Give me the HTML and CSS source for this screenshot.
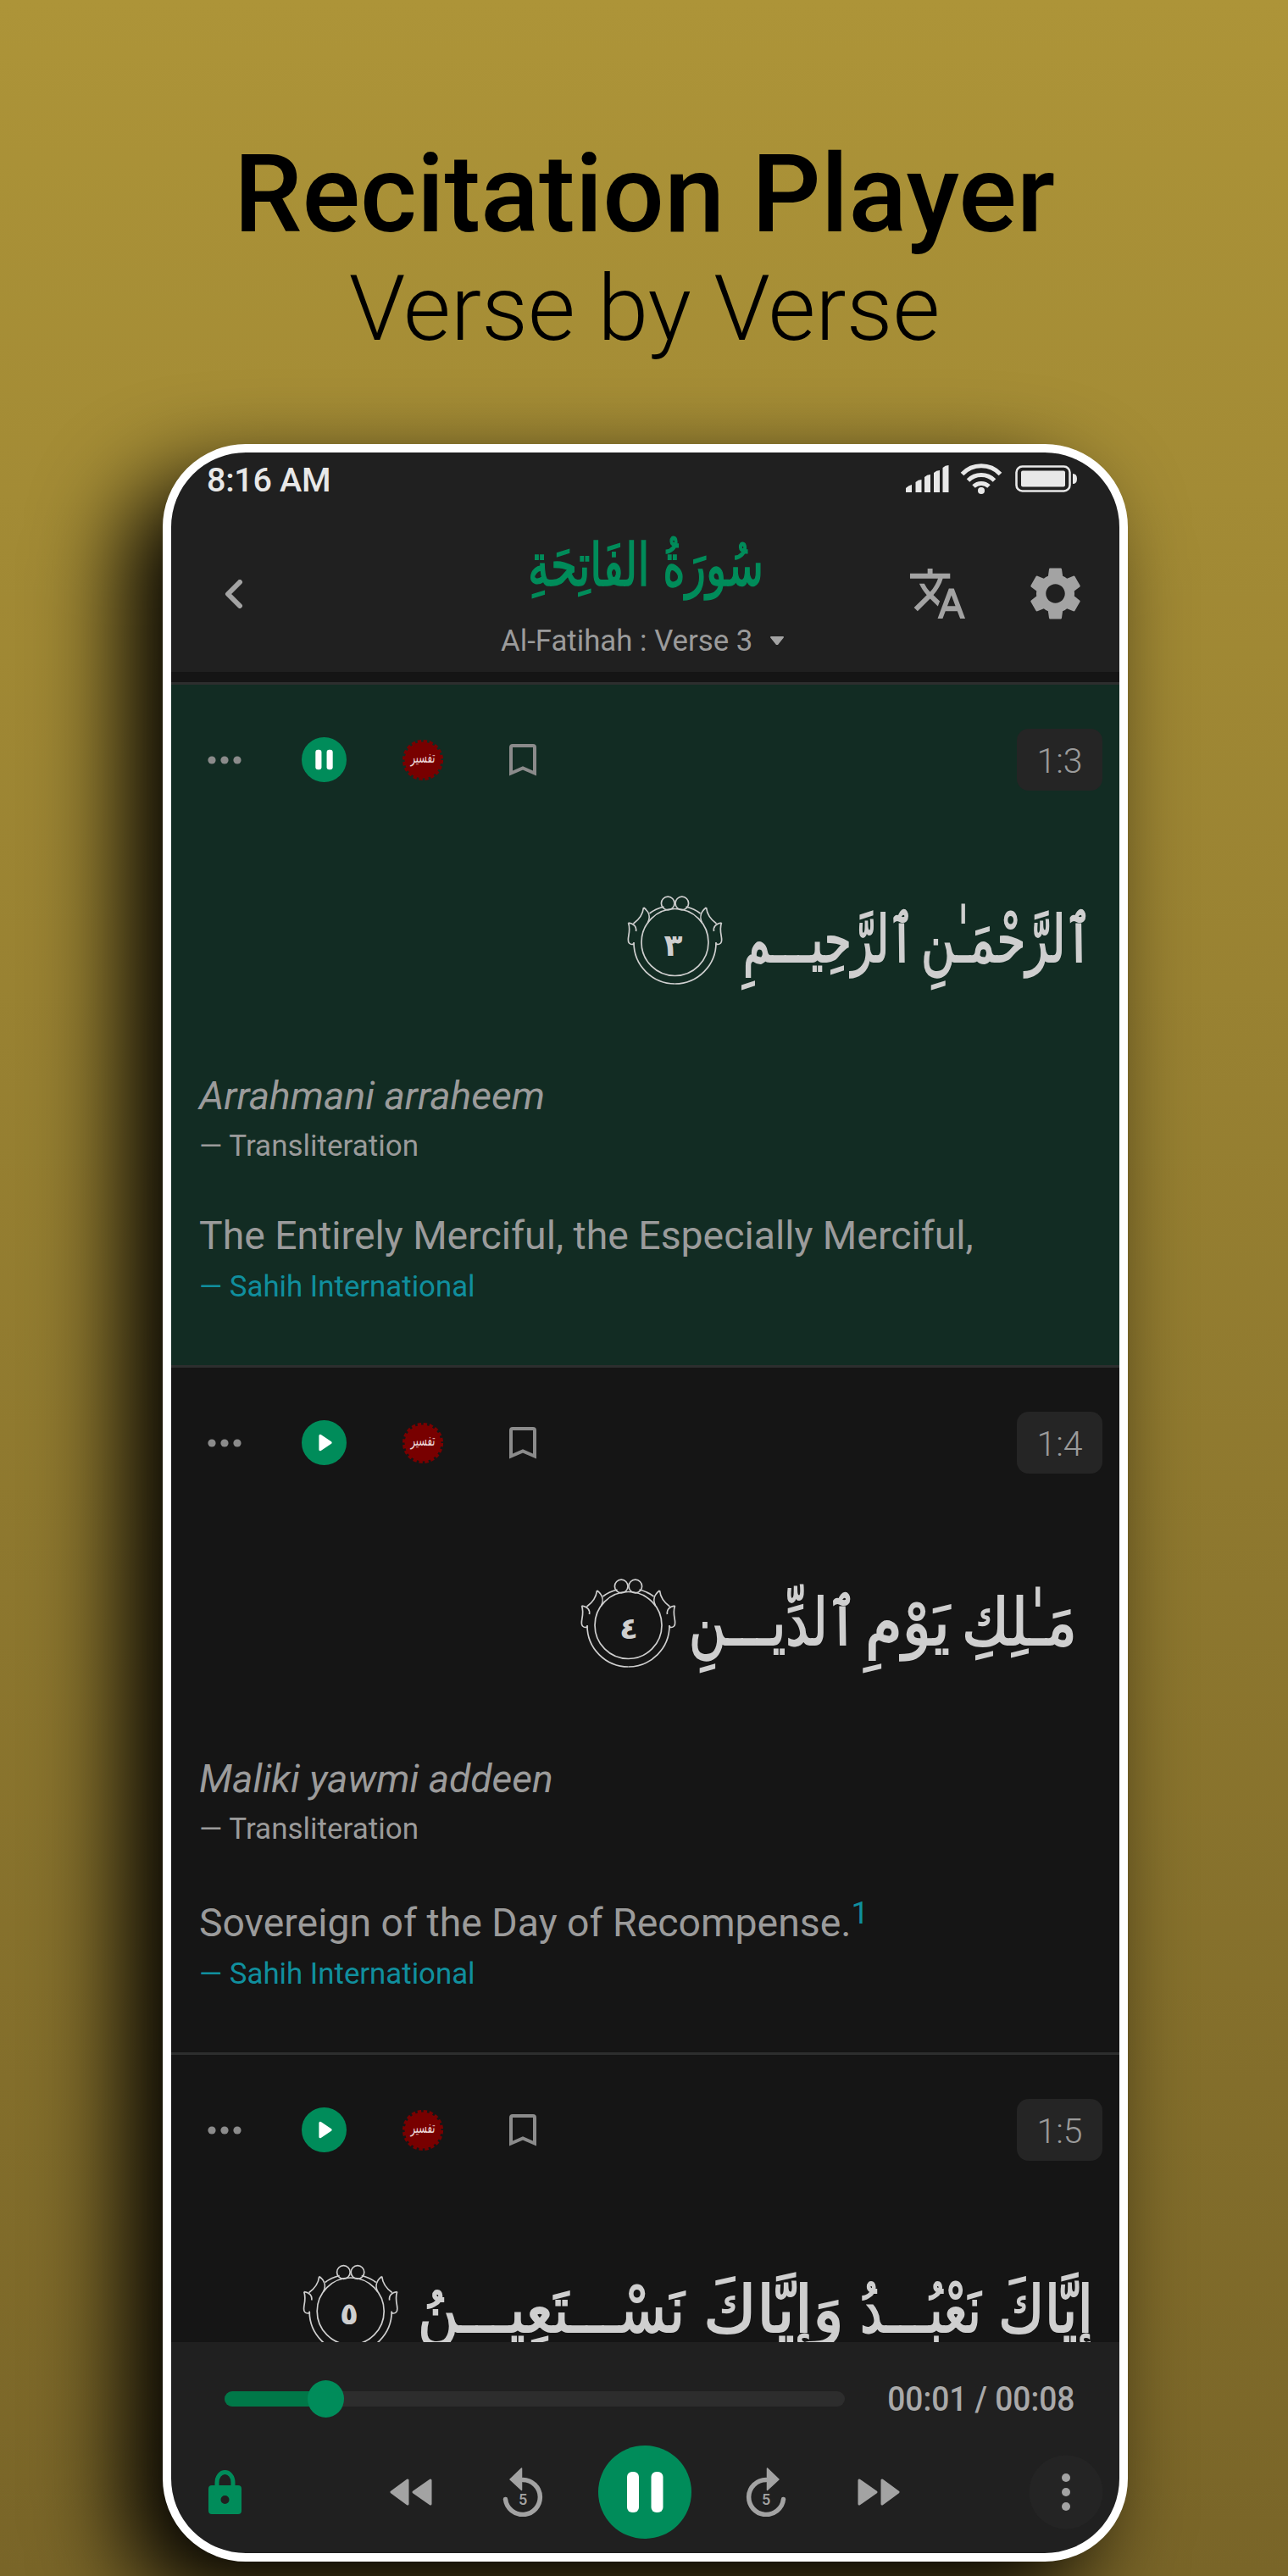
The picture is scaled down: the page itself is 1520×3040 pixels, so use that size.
FILE: index.html
```html
<!DOCTYPE html>
<html lang="en">
<head>
<meta charset="utf-8">
<title>Recitation Player</title>
<link rel="stylesheet" href="styles.css">
</head>
<body>
<svg class="defs" width="0" height="0" aria-hidden="true">
  <symbol id="i-dots" viewBox="0 0 40 10"><circle cx="5" cy="5" r="4.6"/><circle cx="20" cy="5" r="4.6"/><circle cx="35" cy="5" r="4.6"/></symbol>
  <symbol id="i-play" viewBox="0 0 52 52"><circle cx="26" cy="26" r="26" fill="#008c5a"/><path d="M21.500 18v16l12-8z" fill="#fff" stroke="#fff" stroke-width="3" stroke-linejoin="round"/></symbol>
  <symbol id="i-pause" viewBox="0 0 52 52"><circle cx="26" cy="26" r="26" fill="#008c5a"/><rect x="16" y="14.500" width="7" height="23" rx="3" fill="#fff"/><rect x="29" y="14.500" width="7" height="23" rx="3" fill="#fff"/></symbol>
  <symbol id="i-tafsir" viewBox="0 0 50 50"><circle cx="25" cy="25" r="21.500" fill="#780000"/><circle cx="25" cy="25" r="21.800" fill="none" stroke="#780000" stroke-width="4.600" stroke-dasharray="4.300 2.550"/></symbol>
  <symbol id="i-mark" viewBox="0 0 32 38"><path d="M2 4q0-2 2-2h24q2 0 2 2v30.500L16 28.500 2 34.500z" fill="none" stroke="#8b8b8b" stroke-width="4"/></symbol>
  <symbol id="half" overflow="visible"><path d="M0 49A48.500 48.500 0 0 1-48.500 0M-30-34C-25-38-19-40.500-13-42M-37-41C-30-36-29-29-32-23M-37-41C-38-32-42-27-49-22M-55-23C-48-22-45-18-46-13M-55-23C-51-12-58-3-54 1C-52 3-49 3-48 1"/><circle cx="-8.300" cy="-46" r="7.800"/></symbol>
  <symbol id="rosette" overflow="visible"><g fill="none" stroke="#cfcfcf" stroke-width="1.700"><circle r="39.500"/><use href="#half"/><use href="#half" transform="scale(-1 1)"/></g></symbol>
</svg>

<header class="headline">
  <h1>Recitation Player</h1>
  <p>Verse by Verse</p>
</header>

<main class="phone">
  <div class="status">
    <span class="clock">8:16 AM</span>
    <svg class="signal" viewBox="0 0 52 32"><path d="M0 32v-5q3-3 7-4v9zM11.500 32V20q3-3 7-3v15zM22 32V14q3-3 7-3v21zM33 32V9q3-3 7-3v26zM43.500 32V3q3-3 7-3v32z"/></svg>
    <svg class="wifi" viewBox="0 0 50 37"><path d="M2.500 12.500A31 31 0 0 1 47.500 12.500M9.500 20A22 22 0 0 1 40.500 20M16 27A13 13 0 0 1 34 27"/><circle cx="25" cy="32" r="4"/></svg>
    <svg class="battery" viewBox="0 0 73 32"><rect x="1.500" y="1.500" width="63" height="29" rx="7" fill="none" stroke="#e8e8e8" stroke-width="2.600"/><rect x="7" y="6.500" width="52" height="19" rx="2"/><path d="M68 10q5 0 5 6t-5 6z"/></svg>
  </div>

  <div class="topbar">
    <svg class="back" viewBox="0 0 22 34"><path d="M18 3L4 17l14 14"/></svg>
    <div class="title">
      <svg class="surah" viewBox="0 0 282 90"><text x="141" y="66" direction="rtl" text-anchor="middle" textLength="278" lengthAdjust="spacingAndGlyphs">سُورَةُ الفَاتِحَةِ</text></svg>
      <div class="verse-pick"><span>Al-Fatihah : Verse 3</span><svg class="caret" viewBox="0 0 18 12"><path d="M2 2h14L10 9.500q-1 1-2 0z"/></svg></div>
    </div>
    <svg class="translate" viewBox="0 0 24 24"><path d="M12.870 15.070l-2.540-2.510.03-.03c1.740-1.940 2.980-4.170 3.710-6.530H17V4h-7V2H8v2H1v1.990h11.170C11.500 7.920 10.440 9.750 9 11.350 8.070 10.320 7.300 9.190 6.690 8h-2c.73 1.630 1.730 3.170 2.980 4.560l-5.090 5.020L4 19l5-5 3.110 3.110.76-2.040zM18.500 10h-2L12 22h2l1.120-3h4.750L21 22h2l-4.500-12zm-2.620 7l1.620-4.330L19.120 17h-3.240z"/></svg>
    <svg class="gear" viewBox="0 0 24 24"><path d="M19.140 12.940c.04-.3.06-.61.06-.94 0-.32-.02-.64-.07-.94l2.030-1.580c.18-.14.23-.41.12-.61l-1.920-3.320c-.12-.22-.37-.29-.59-.22l-2.390.96c-.5-.38-1.030-.7-1.620-.94L14.400 2.810c-.04-.24-.24-.41-.48-.41h-3.840c-.24 0-.43.17-.47.41L9.250 5.350C8.660 5.590 8.120 5.920 7.630 6.290L5.240 5.330c-.22-.08-.47 0-.59.22L2.740 8.870c-.12.21-.08.47.12.61l2.030 1.580C4.840 11.360 4.800 11.690 4.800 12s.02.64.07.94l-2.030 1.580c-.18.14-.23.41-.12.61l1.920 3.320c.12.22.37.29.59.22l2.390-.96c.5.38 1.030.7 1.620.94l.36 2.540c.05.24.24.41.48.41h3.840c.24 0 .44-.17.47-.41l.36-2.540c.59-.24 1.130-.56 1.620-.94l2.390.96c.22.08.47 0 .59-.22l1.920-3.320c.12-.22.07-.47-.12-.61L19.140 12.940zM12 15.600c-1.980 0-3.600-1.620-3.600-3.600s1.620-3.600 3.600-3.600 3.600 1.620 3.600 3.600-1.620 3.600-3.600 3.600z"/></svg>
  </div>

  <div class="verses">
    <article class="verse active">
      <div class="tools">
        <svg class="dots"><use href="#i-dots"/></svg>
        <svg class="play"><use href="#i-pause"/></svg>
        <svg class="tafsir" viewBox="0 0 50 50"><use href="#i-tafsir"/><text x="25" y="28" textLength="29" lengthAdjust="spacingAndGlyphs">تفسير</text></svg>
        <svg class="mark"><use href="#i-mark"/></svg>
        <span class="num">1:3</span>
      </div>
      <svg class="ayah" viewBox="202 1040 1119 150">
        <text x="1290" y="1135" textLength="203" lengthAdjust="spacingAndGlyphs">ٱلرَّحْمَـٰنِ</text>
        <text x="1080" y="1135" textLength="203" lengthAdjust="spacingAndGlyphs">ٱلرَّحِيـــمِ</text>
        <use href="#rosette" x="796.500" y="1112"/>
        <text class="count" x="794.500" y="1128">٣</text>
      </svg>
      <p class="translit">Arrahmani arraheem</p>
      <p class="source">— Transliteration</p>
      <p class="english">The Entirely Merciful, the Especially Merciful,</p>
      <p class="source link">— Sahih International</p>
    </article>

    <article class="verse second">
      <div class="tools">
        <svg class="dots"><use href="#i-dots"/></svg>
        <svg class="play"><use href="#i-play"/></svg>
        <svg class="tafsir" viewBox="0 0 50 50"><use href="#i-tafsir"/><text x="25" y="28" textLength="29" lengthAdjust="spacingAndGlyphs">تفسير</text></svg>
        <svg class="mark"><use href="#i-mark"/></svg>
        <span class="num">1:4</span>
      </div>
      <svg class="ayah" viewBox="202 1040 1119 150">
        <text x="1271" y="1135" textLength="136" lengthAdjust="spacingAndGlyphs">مَـٰلِكِ</text>
        <text x="1121" y="1135" textLength="100" lengthAdjust="spacingAndGlyphs">يَوْمِ</text>
        <text x="1012" y="1135" textLength="199" lengthAdjust="spacingAndGlyphs">ٱلدِّيـــنِ</text>
        <use href="#rosette" x="741.500" y="1112"/>
        <text class="count" x="742" y="1128">٤</text>
      </svg>
      <p class="translit">Maliki yawmi addeen</p>
      <p class="source">— Transliteration</p>
      <p class="english">Sovereign of the Day of Recompense.<sup>1</sup></p>
      <p class="source link">— Sahih International</p>
    </article>

    <article class="verse">
      <div class="tools">
        <svg class="dots"><use href="#i-dots"/></svg>
        <svg class="play"><use href="#i-play"/></svg>
        <svg class="tafsir" viewBox="0 0 50 50"><use href="#i-tafsir"/><text x="25" y="28" textLength="29" lengthAdjust="spacingAndGlyphs">تفسير</text></svg>
        <svg class="mark"><use href="#i-mark"/></svg>
        <span class="num">1:5</span>
      </div>
      <svg class="ayah" viewBox="202 1040 1119 150">
        <text x="1290" y="1135" textLength="112" lengthAdjust="spacingAndGlyphs">إِيَّاكَ</text>
        <text x="1158" y="1135" textLength="143" lengthAdjust="spacingAndGlyphs">نَعْبُـــدُ</text>
        <text x="996" y="1135" textLength="166" lengthAdjust="spacingAndGlyphs">وَإِيَّاكَ</text>
        <text x="808" y="1135" textLength="315" lengthAdjust="spacingAndGlyphs">نَسْـــتَعِيـــنُ</text>
        <use href="#rosette" x="413.700" y="1110.500"/>
        <text class="count" x="412" y="1126">٥</text>
      </svg>
    </article>
  </div>

  <footer class="player">
    <div class="seek">
      <div class="track"><div class="fill"></div><div class="thumb"></div></div>
      <span class="time">00:01 / 00:08</span>
    </div>
    <div class="controls">
      <svg class="lock" viewBox="0 0 39 52"><path d="M10 20V14.500a9.500 12 0 0 1 19 0V20" fill="none" stroke="#008c5a" stroke-width="5"/><path fill-rule="evenodd" fill="#008c5a" d="M4 18h31q4 0 4 4v26q0 4-4 4H4q-4 0-4-4V22q0-4 4-4zM19.500 30a5 5 0 1 0 0 10 5 5 0 0 0 0-10z"/></svg>
      <svg class="rew" viewBox="0 0 50 32"><path d="M2 16L21 2v28zM28 16L48 2v28z"/></svg>
      <svg class="replay" viewBox="0 0 48 58"><path class="arc" d="M3.500 37.500A20.500 20.500 0 1 0 24 14.500"/><path class="tip" d="M9 14L22.500 1v25.500z"/><text x="24" y="44">5</text></svg>
      <svg class="main" viewBox="0 0 110 110"><circle cx="55" cy="55" r="55" fill="#008c5a"/><rect x="34" y="31" width="14" height="48" rx="6" fill="#fff"/><rect x="62.500" y="31" width="14" height="48" rx="6" fill="#fff"/></svg>
      <svg class="forward" viewBox="0 0 48 58"><path class="arc" d="M44.500 37.500A20.500 20.500 0 1 1 24 14.500"/><path class="tip" d="M39 14L25.500 1v25.500z"/><text x="24" y="44">5</text></svg>
      <svg class="ff" viewBox="0 0 50 32"><path d="M22 16L2 2v28zM48 16L29 2v28z"/></svg>
      <svg class="more" viewBox="0 0 88 88"><circle cx="44" cy="44" r="43.500" fill="#242424"/><circle cx="44" cy="27" r="5"/><circle cx="44" cy="44" r="5"/><circle cx="44" cy="61" r="5"/></svg>
    </div>
  </footer>
</main>
</body>
</html>
```
FILE: styles.css
```css
* { box-sizing: border-box; margin: 0; padding: 0; }

body {
  width: 1520px;
  height: 3040px;
  overflow: hidden;
  background: linear-gradient(#ad9438, #796528);
  font-family: Roboto, "Liberation Sans", sans-serif;
  color: #9b9b9b;
}

svg { display: block; flex: none; }
p, span { white-space: nowrap; }
.defs { position: absolute; }

.headline {
  height: 524px;
  padding-top: 153px;
  text-align: center;
  color: #000;
}
.headline h1 { font-size: 128px; font-weight: 500; line-height: 152px; padding-left: 1px; }
.headline p { font-size: 108px; font-weight: 300; line-height: 126px; margin-top: -4px; padding-left: 1px; }

.phone {
  width: 1139px;
  height: 2499px;
  margin-left: 192px;
  border: 10px solid #fff;
  border-radius: 98px;
  background: #202020;
  overflow: hidden;
  display: flex;
  flex-direction: column;
  box-shadow: -44px 42px 108px #000;
}

/* status bar */
.status {
  height: 62px;
  padding: 0 50px 0 42px;
  display: flex;
  align-items: center;
  fill: #e8e8e8;
  color: #e8e8e8;
}
.clock { font-size: 39.500px; font-weight: 500; letter-spacing: -0.3px; margin-right: auto; padding-top: 3px; }
.signal { width: 52px; height: 32px; margin-right: 12px; }
.wifi { width: 50px; height: 37px; margin-right: 15px; }
.wifi path { fill: none; stroke: #e8e8e8; stroke-width: 5; }
.battery { width: 73px; height: 32px; }

/* title bar */
.topbar {
  height: 197px;
  padding: 0 38px 0 63px;
  display: flex;
  align-items: flex-start;
  fill: #a3a3a3;
}
.back { width: 22px; height: 34px; margin-top: 88px; }
.back path { fill: none; stroke: #a3a3a3; stroke-width: 6; stroke-linecap: round; stroke-linejoin: round; }
.title { width: 338px; margin: 29px 143px 0 304px; }
.surah { width: 282px; height: 90px; margin-left: 30px; overflow: visible; }
.surah text { font: 70px "DejaVu Sans", sans-serif; fill: #008c5a; stroke: #008c5a; stroke-width: 1.600; }
.verse-pick { display: flex; align-items: center; justify-content: space-between; height: 42px; margin-top: 20px; }
.verse-pick span { font-size: 34.800px; line-height: 42px; }
.caret { width: 18px; height: 12px; }
.caret path { stroke: #a3a3a3; stroke-width: 2; stroke-linejoin: round; }
.translate { width: 71px; height: 71px; margin-top: 69px; }
.gear { width: 75px; height: 75px; margin: 67px 0 0 66px; }
.topbar .translate { margin-left: 2px; }

/* verse list */
.verses {
  height: 1971px;
  padding-top: 12px;
  background: #151515;
  overflow: hidden;
}
.verse { height: 806px; border-top: 3px solid #2d2e2e; padding-top: 52px; }
.verse.second { height: 811px; }
.verse.active { background: #122c23; }
.tools { height: 73px; padding: 0 20px 0 43px; display: flex; align-items: center; fill: #8b8b8b; }
.dots { width: 40px; height: 10px; margin-right: 71px; }
.play { width: 53px; height: 53px; margin-right: 65px; }
.tafsir { width: 50px; height: 50px; margin-right: 77px; }
.tafsir text { font: 18px "DejaVu Sans", sans-serif; fill: #eddada; text-anchor: middle; direction: rtl; }
.mark { width: 32px; height: 38px; }
.num {
  width: 101px;
  height: 73px;
  margin-left: auto;
  border-radius: 14px;
  background: #252525;
  font-size: 41px;
  font-weight: 300;
  line-height: 77px;
  text-align: center;
}
.ayah { width: 1119px; height: 150px; margin-top: 107px; }
.ayah text { font: 76px "DejaVu Sans", sans-serif; fill: #cfcfcf; stroke: #cfcfcf; stroke-width: 1.800; direction: rtl; }
.ayah .count { font-size: 36px; font-weight: 700; text-anchor: middle; stroke: none; }
.translit { margin: 76px 0 0 33px; font-size: 46.200px; font-style: italic; line-height: 54px; }
.source { margin: 12px 0 0 33px; font-size: 35px; line-height: 42px; }
.english { margin: 57px 0 0 33px; font-size: 46.350px; line-height: 54px; }
.english + .source { margin-top: 12px; }
.source.link, sup { color: #108f9e; }
.source.link { font-size: 34.800px; }
.second .english { margin-top: 62px; }
sup { font-size: 37px; line-height: 0; vertical-align: 15px; }

/* player */
.player { height: 249px; }
.seek { height: 134px; padding: 0 53px 0 63px; display: flex; align-items: center; justify-content: space-between; }
.track { position: relative; width: 732px; height: 18px; border-radius: 9px; background: #2d2d2d; }
.fill { width: 120px; height: 18px; border-radius: 9px; background: #007848; }
.thumb { position: absolute; left: 98px; top: -13px; width: 43px; height: 44px; border-radius: 50%; background: #008c5a; }
.time { font-size: 41px; font-weight: 500; color: #a9a9a9; transform: scaleX(0.905); transform-origin: right; }
.controls { height: 110px; margin-top: -12.500px; padding: 0 19px 0 44px; display: flex; align-items: center; fill: #a3a3a3; }
.lock { width: 39px; height: 52px; }
.rew { width: 50px; height: 32px; margin-left: 175px; }
.rew path, .ff path { stroke: #a3a3a3; stroke-width: 3; stroke-linejoin: round; }
.replay { width: 48px; height: 58px; margin: 0 64.500px 0 83px; }
.main { width: 110px; height: 110px; }
.forward { width: 48px; height: 58px; margin: 0 84px 0 64.500px; }
.arc { fill: none; stroke: #a3a3a3; stroke-width: 5.500; stroke-linecap: round; }
.tip { stroke: #a3a3a3; stroke-width: 1.500; stroke-linejoin: round; }
.replay text, .forward text { font: 500 18px Roboto, sans-serif; text-anchor: middle; }
.ff { width: 50px; height: 32px; }
.more { width: 88px; height: 88px; margin-left: auto; }
```
